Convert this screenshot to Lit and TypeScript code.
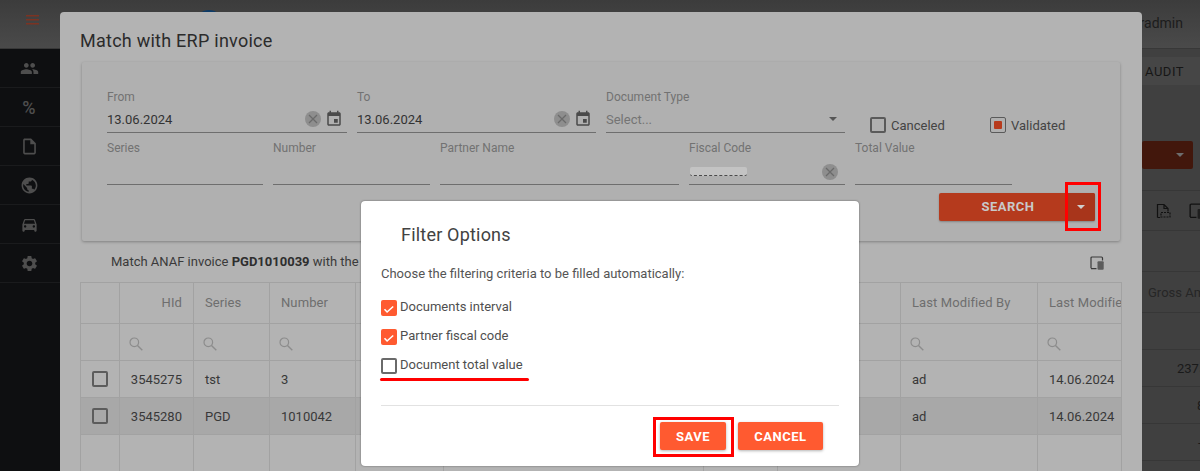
import { LitElement, html, css, svg } from "lit";
import { customElement } from "lit/decorators.js";

const P = {
  people: "M16 11c1.66 0 2.99-1.34 2.99-3S17.66 5 16 5c-1.66 0-3 1.34-3 3s1.34 3 3 3zm-8 0c1.66 0 2.99-1.34 2.99-3S9.66 5 8 5C6.34 5 5 6.34 5 8s1.34 3 3 3zm0 2c-2.33 0-7 1.17-7 3.5V19h14v-2.5c0-2.33-4.67-3.5-7-3.5zm8 0c-.29 0-.62.02-.97.05 1.16.84 1.97 1.97 1.97 3.45V19h6v-2.5c0-2.33-4.67-3.5-7-3.5z",
  file: "M14 2H6c-1.1 0-1.99.9-1.99 2L4 20c0 1.1.89 2 1.99 2H18c1.1 0 2-.9 2-2V8l-6-6zM6 20V4h7v5h5v11H6z",
  globe: "M12 2C6.48 2 2 6.48 2 12s4.48 10 10 10 10-4.48 10-10S17.52 2 12 2zm-1 17.93c-3.95-.49-7-3.85-7-7.93 0-.62.08-1.21.21-1.79L9 15v1c0 1.1.9 2 2 2v1.93zm6.9-2.54c-.26-.81-1-1.39-1.9-1.39h-1v-3c0-.55-.45-1-1-1H8v-2h2c.55 0 1-.45 1-1V7h2c1.1 0 2-.9 2-2v-.41c2.93 1.19 5 4.06 5 7.41 0 2.08-.8 3.97-2.1 5.39z",
  car: "M18.92 6.01C18.72 5.42 18.16 5 17.5 5h-11c-.66 0-1.21.42-1.42 1.01L3 12v8c0 .55.45 1 1 1h1c.55 0 1-.45 1-1v-1h12v1c0 .55.45 1 1 1h1c.55 0 1-.45 1-1v-8l-2.08-5.99zM6.5 16c-.83 0-1.5-.67-1.5-1.5S5.67 13 6.5 13s1.5.67 1.5 1.5S7.33 16 6.5 16zm11 0c-.83 0-1.5-.67-1.5-1.5s.67-1.5 1.5-1.5 1.5.67 1.5 1.5-.67 1.5-1.5 1.5zM5 11l1.5-4.5h11L19 11H5z",
  gear: "M19.14 12.94c.04-.3.06-.61.06-.94 0-.32-.02-.64-.07-.94l2.03-1.58a.49.49 0 0 0 .12-.61l-1.92-3.32a.488.488 0 0 0-.59-.22l-2.39.96c-.5-.38-1.03-.7-1.62-.94l-.36-2.54a.484.484 0 0 0-.48-.41h-3.84c-.24 0-.43.17-.47.41l-.36 2.54c-.59.24-1.13.57-1.62.94l-2.39-.96c-.22-.08-.47 0-.59.22L2.74 8.87c-.12.21-.08.47.12.61l2.03 1.58c-.05.3-.09.63-.09.94s.02.64.07.94l-2.03 1.58a.49.49 0 0 0-.12.61l1.92 3.32c.12.22.37.29.59.22l2.39-.96c.5.38 1.03.7 1.62.94l.36 2.54c.05.24.24.41.48.41h3.84c.24 0 .44-.17.47-.41l.36-2.54c.59-.24 1.13-.56 1.62-.94l2.39.96c.22.08.47 0 .59-.22l1.92-3.32c.12-.22.07-.47-.12-.61l-2.01-1.58zM12 15.6c-1.98 0-3.6-1.62-3.6-3.6s1.62-3.6 3.6-3.6 3.6 1.62 3.6 3.6-1.62 3.6-3.6 3.6z",
  cal: "M17 12h-5v5h5v-5zM16 1v2H8V1H6v2H5c-1.11 0-1.99.9-1.99 2L3 19c0 1.1.89 2 2 2h14c1.1 0 2-.9 2-2V5c0-1.1-.9-2-2-2h-1V1h-2zm3 18H5V8h14v11z",
};

const icon = (d: string, cls: string) =>
  html`<svg class=${cls} viewBox="0 0 24 24"><path d=${d} fill="currentColor"></path></svg>`;

const clearBtn = html`<svg class="clear" viewBox="0 0 16 16"><circle cx="8" cy="8" r="8" fill="#8e8e8e"></circle><path d="M4 4l8 8M12 4l-8 8" stroke="#6a6a6a" stroke-width="1.2" fill="none"></path></svg>`;
const searchIcon = html`<svg class="srch" viewBox="0 0 14 14"><circle cx="5.3" cy="5.3" r="4.3" fill="none" stroke="#8c8c8c" stroke-width="1.2"></circle><path d="M8.5 8.5l4.8 4.8" stroke="#8c8c8c" stroke-width="1.4" fill="none"></path></svg>`;
const caret = html`<span class="caret"></span>`;
const tick = svg`<path d="M3.5 9.300l2.600 2.700 6.100-5.500" fill="none" stroke="#fff" stroke-width="1.6"></path>`;
const deviceIcon = html`<svg class="device" viewBox="0 0 14 14"><path d="M1 12.300V2a1 1 0 0 1 1-1h9.500a1 1 0 0 1 1 1v2.500M1 12.600h5.500" fill="none" stroke="currentColor" stroke-width="1.200"></path><rect x="7.500" y="5.200" width="6.200" height="8.600" rx="1" fill="currentColor" opacity=".72"></rect></svg>`;

const cols = [
  ["", "", ""],
  ["HId", "3545275", "3545280"],
  ["Series", "tst", "PGD"],
  ["Number", "3", "1010042"],
  ["", "", ""],
  ["", "", ""],
  ["", "", ""],
  ["Fiscal Code", "", ""],
  ["Last Modified By", "ad", "ad"],
  ["Last Modified On", "14.06.2024", "14.06.2024"],
];

@customElement("app-root")
export class AppRoot extends LitElement {
  static styles = css`
    :host { display: block; width: 1200px; height: 471px; position: relative; overflow: hidden; font-family: Roboto, "Liberation Sans", sans-serif; font-size: 13px; background: #404040; }
    *, *::after { box-sizing: border-box; }
    svg { display: block; flex: none; }

    .app { display: flex; flex-direction: column; height: 471px; }
    .top { height: 49px; flex: none; display: flex; align-items: center; background: linear-gradient(#3c3c3c, #4a4a4a); border-bottom: 1px solid #383838; }
    .burger { width: 13px; height: 10px; margin: -8px 0 0 26px; color: #7c3322; }
    .logo { width: 28px; height: 28px; border-radius: 50%; background: #0d3a66; margin: -1px 0 0 156px; }
    .user { margin-left: auto; margin-right: 17px; font-size: 14px; color: #1c1c1c; margin-top: -3px; }
    .body { flex: 1; display: flex; min-height: 0; }
    .side { width: 60px; flex: none; background: #0e0f11; display: flex; flex-direction: column; }
    .side div { height: 39px; flex: none; display: flex; align-items: center; justify-content: center; padding-right: 2px; border-bottom: 1px solid #1a1b1d; color: #4e4e4e; font-size: 18px; font-weight: 500; }
    .side svg { width: 19px; height: 19px; }
    .main { flex: 1; display: flex; flex-direction: column; align-items: flex-end; min-width: 0; }
    .tabs { width: 100%; height: 28px; margin-top: 8px; background: #464646; display: flex; justify-content: flex-end; align-items: center; padding-right: 16px; color: #161616; font-size: 13px; letter-spacing: .5px; }
    .bigbtn { width: 51px; height: 28px; margin: 56px 7px 0 0; background: #42170c; border-radius: 2px; display: flex; align-items: center; justify-content: flex-end; padding-right: 9px; }
    .bigbtn .caret { border-top-color: #6d6d6d; }
    .bar { width: 100%; height: 41px; margin-top: 21px; border-top: 1px solid #373737; border-bottom: 1px solid #373737; display: flex; align-items: center; justify-content: flex-end; gap: 18px; color: #111; }
    .bar svg { width: 16px; height: 16px; }
    .bar .device { margin-right: -5px; }
    .grow { width: 100%; color: #1a1a1a; display: flex; align-items: center; border-bottom: 1px solid #373737; height: 37px; white-space: nowrap; overflow: hidden; }
    .grow.spacer { height: 41px; }
    .grow.head { height: 41px; color: #262626; padding-left: 1088px; }
    .grow.n1 { padding-left: 1117px; }
    .grow.n2 { padding-left: 1137px; }
    .grow.n3 { padding-left: 1138px; }

    .modal { position: absolute; left: 60px; top: 12px; width: 1082px; height: 470px; background: #b3b3b3; border-radius: 4px; padding: 19px 20px 0; }
    .title { font-size: 18px; line-height: 20px; height: 20px; color: #2b2b2b; letter-spacing: .25px; }
    .panel { margin: 11px 0 0 2px; width: 1038px; height: 179px; background: #b0b0b0; border-radius: 2px; box-shadow: 0 1px 3px rgba(0,0,0,.28); padding: 28px 0 0 25px; }
    .r1 { display: grid; grid-template-columns: 240px 239px 239px auto; column-gap: 10px; height: 43px; }
    .r2 { display: grid; grid-template-columns: 156px 157px 239px 156px 157px; column-gap: 10px; height: 45px; margin-top: 8px; }
    .lab { font-size: 12px; line-height: 14px; color: #727272; }
    .val { display: flex; align-items: center; height: 29px; border-bottom: 1px solid #6e6e6e; color: #333; white-space: nowrap; padding-top: 2px; }
    .r2 .val { height: 30px; padding-top: 4px; }
    .val .ph { color: #747474; }
    .val .push { margin-left: auto; }
    .clear { width: 16px; height: 16px; }
    .fclear { display: block; margin-right: 7px; }
    .cal { width: 18px; height: 18px; margin: 0 4px; color: #4a4a4a; }
    .caret { display: block; width: 0; height: 0; border-left: 4px solid transparent; border-right: 4px solid transparent; border-top: 4px solid #555; }
    .val .caret { margin-right: 8px; }
    .blur { width: 57px; height: 9px; margin-left: 1px; background: #c3c3c3; border-bottom: 1px dashed #4a4a4a; border-radius: 2px; }
    .checks { display: flex; align-items: center; padding: 27px 0 0 15px; color: #444; }
    .chk { width: 16px; height: 16px; border: 2px solid #5a5a5a; border-radius: 2px; flex: none; }
    .checks .label { margin-left: 5px; width: 99px; }
    .val2 { width: 16px; height: 16px; border: 1px solid #5a5a5a; border-radius: 2px; flex: none; display: flex; align-items: center; justify-content: center; }
    .val2 i { width: 8px; height: 8px; background: #b73b1d; border-radius: 1px; }
    .actions { display: flex; justify-content: flex-end; margin: 7px 25px 0 0; }
    .search { display: flex; width: 156px; height: 28px; background: #b53a1d; border-radius: 2px; color: #c9c9c9; font-weight: 700; letter-spacing: .5px; box-shadow: 0 1px 2px rgba(0,0,0,.25); position: relative; }
    .search .t { flex: 1; display: flex; align-items: center; justify-content: center; padding: 0 0 1px 11px; }
    .search .d { width: 29px; background: #a8351b; display: flex; align-items: center; justify-content: center; border-radius: 0 2px 2px 0; }
    .search .caret { border-top-color: #cfcfcf; }
    .mark { position: absolute; left: 126px; top: -11px; width: 36px; height: 49px; border: 3px solid #f00; }

    .msg { height: 41px; padding-left: 31px; display: flex; align-items: center; color: #3a3a3a; position: relative; }
    .msg b { font-weight: 700; color: #2e2e2e; }
    .msg .device { position: absolute; right: 18px; top: 15px; width: 14px; height: 14px; color: #3a3a3a; }
    .tbl { width: 1042px; display: grid; grid-template-columns: 39px 74px 76px 86px 88px 260px 74px 123px 137px 84px; grid-template-rows: 41px 37px 37px 37px 37px; border-top: 1px solid #a2a2a2; border-left: 1px solid #a2a2a2; overflow: hidden; }
    .c { border-right: 1px solid #a2a2a2; border-bottom: 1px solid #a2a2a2; display: flex; align-items: center; padding: 0 11px; color: #383838; white-space: nowrap; overflow: hidden; min-width: 0; }
    .c.h { color: #6e6e6e; letter-spacing: .1px; padding-bottom: 2px; }
    .c.dark { background: #a8a8a8; }
    .c.right { justify-content: flex-end; }
    .c.f { padding: 3px 9px 0; }
    .c.sel { padding: 0 1px 0 0; justify-content: center; }
    .srch { width: 14px; height: 14px; }
    .tcheck { width: 16px; height: 16px; border: 2px solid #5c5c5c; border-radius: 2px; }

    .dlg { position: absolute; left: 361px; top: 201px; width: 498px; height: 265px; background: #fff; border-radius: 4px; padding: 23px 20px 0; box-shadow: 0 0 2px rgba(0,0,0,.5); }
    .dt { padding-left: 20px; font-size: 18px; line-height: 22px; color: #424242; letter-spacing: .2px; }
    .dp { margin-top: 20px; line-height: 16px; color: #555; }
    .opts { margin-top: 18px; display: flex; flex-direction: column; gap: 13px; }
    .opt { display: flex; height: 16px; color: #4f4f4f; line-height: 13px; }
    .opt span { margin-left: 3px; }
    .box { width: 16px; height: 16px; border-radius: 2px; flex: none; }
    .box.on { background: #ff5a30; }
    .box.off { border: 2px solid #6a6a6a; background: #fff; }
    .uline { height: 3px; width: 149px; margin: 4px 0 0 -1px; background: #f00; border-radius: 2px; }
    .hr { height: 1px; background: #e2e2e2; margin-top: 24px; }
    .btns { display: flex; justify-content: flex-end; gap: 12px; margin: 16px 16px 0 0; }
    .b { height: 28px; background: #ff5a30; color: #fff; font-weight: 700; letter-spacing: .5px; border-radius: 2px; display: flex; align-items: center; justify-content: center; box-shadow: 0 1px 3px rgba(0,0,0,.3); position: relative; }
    .b.s { width: 66px; }
    .b.c2 { width: 85px; }
    .b.s::after { content: ""; position: absolute; left: -7px; top: -5px; width: 81px; height: 40px; border: 3px solid #f00; }
  `;

  private field(label: string, content: unknown) {
    return html`<div><div class="lab">${label}</div><div class="val">${content}</div></div>`;
  }

  render() {
    const dateVal = html`13.06.2024<span class="push"></span>${clearBtn}${icon(P.cal, "cal")}`;
    return html`
      <div class="app">
        <div class="top">
          <svg class="burger" viewBox="0 0 13 10"><path d="M0 0h13v1.400H0zM0 4h13v1.400H0zM0 8h13v1.400H0z" fill="currentColor"></path></svg>
          <div class="logo"></div>
          <div class="user">radmin</div>
        </div>
        <div class="body">
          <div class="side">
            <div>${icon(P.people, "")}</div>
            <div>%</div>
            <div>${icon(P.file, "")}</div>
            <div>${icon(P.globe, "")}</div>
            <div>${icon(P.car, "")}</div>
            <div>${icon(P.gear, "")}</div>
          </div>
          <div class="main">
            <div class="tabs">AUDIT</div>
            <div class="bigbtn">${caret}</div>
            <div class="bar">
              <svg viewBox="0 0 16 16"><path d="M2.500 14.500V1.500h6.500L13 5.500v3M2.500 14.500h2.500M9 1.500v4h4" fill="none" stroke="currentColor" stroke-width="1.200"></path><path d="M6 9.500h9v4.500H6z" fill="none" stroke="currentColor" stroke-width="1.200" stroke-dasharray="2 1"></path></svg>
              ${deviceIcon}
            </div>
            <div class="grow spacer"></div>
            <div class="grow head">Gross Amount</div>
            <div class="grow"></div>
            <div class="grow n1">2375</div>
            <div class="grow n2">8</div>
            <div class="grow n3">-</div>
          </div>
        </div>
      </div>

      <div class="modal">
        <div class="title">Match with ERP invoice</div>
        <div class="panel">
          <div class="r1">
            ${this.field("From", dateVal)}
            ${this.field("To", dateVal)}
            ${this.field("Document Type", html`<span class="ph">Select...</span><span class="push"></span>${caret}`)}
            <div class="checks">
              <div class="chk"></div><div class="label">Canceled</div>
              <div class="val2"><i></i></div><div class="label">Validated</div>
            </div>
          </div>
          <div class="r2">
            ${this.field("Series", "")}
            ${this.field("Number", "")}
            ${this.field("Partner Name", "")}
            ${this.field("Fiscal Code", html`<div class="blur"></div><span class="push"></span><span class="fclear">${clearBtn}</span>`)}
            ${this.field("Total Value", "")}
          </div>
          <div class="actions">
            <div class="search">
              <div class="t">SEARCH</div>
              <div class="d">${caret}</div>
              <div class="mark"></div>
            </div>
          </div>
        </div>
        <div class="msg"><span>Match ANAF invoice <b>PGD1010039</b> with the</span>${deviceIcon}</div>
        <div class="tbl">
          ${cols.map((c, i) => html`<div class="c h ${i === 1 ? "right" : ""}">${c[0]}</div>`)}
          ${cols.map((_, i) => html`<div class="c f">${i > 0 ? searchIcon : ""}</div>`)}
          ${[1, 2].map((r) =>
            cols.map((c, i) =>
              i === 0
                ? html`<div class="c sel ${r === 2 ? "dark" : ""}"><div class="tcheck"></div></div>`
                : html`<div class="c ${r === 2 ? "dark" : ""} ${i === 1 ? "right" : ""}">${c[r]}</div>`
            )
          )}
          ${cols.map(() => html`<div class="c"></div>`)}
        </div>
      </div>

      <div class="dlg">
        <div class="dt">Filter Options</div>
        <div class="dp">Choose the filtering criteria to be filled automatically:</div>
        <div class="opts">
          <div class="opt"><svg class="box on" viewBox="0 0 16 16">${tick}</svg><span>Documents interval</span></div>
          <div class="opt"><svg class="box on" viewBox="0 0 16 16">${tick}</svg><span>Partner fiscal code</span></div>
          <div class="opt"><div class="box off"></div><span>Document total value</span></div>
        </div>
        <div class="uline"></div>
        <div class="hr"></div>
        <div class="btns"><div class="b s">SAVE</div><div class="b c2">CANCEL</div></div>
      </div>
    `;
  }
}
